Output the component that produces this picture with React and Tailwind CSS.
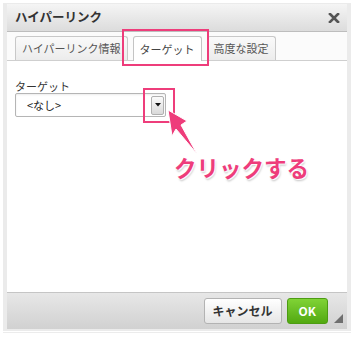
import React from 'react'

const jp = "font-['Noto_Sans_CJK_JP','Noto_Sans',sans-serif]"

function Tab({ label, active }) {
  if (active) {
    return (
      <div className="h-[25px] -mb-px px-[6px] flex items-center bg-white border border-b-0 border-[#c4c4c4] rounded-t-[3px] text-[11px] text-[#444]">
        {label}
      </div>
    )
  }
  return (
    <div className="h-[24px] px-[6px] flex items-center bg-gradient-to-b from-[#fafafa] to-[#ececec] border border-b-0 border-[#c8c8c8] rounded-t-[3px] text-[11px] text-[#555]">
      {label}
    </div>
  )
}

export default function App() {
  return (
    <div className={`relative w-[359px] h-[339px] bg-white overflow-hidden ${jp}`}>
      <div className="ml-[3px] mt-[3px] w-[348px] bg-[#ebebeb] px-[4px] pt-[1px] pb-[2px]">
        <div className="relative flex flex-col h-[325px] bg-white">
          {/* header */}
          <div className="h-[28px] shrink-0 flex items-center justify-between pl-[8px] pr-[6px] bg-gradient-to-b from-[#f5f5f5] to-[#dcdcdc] border-b border-[#bdbdbd]">
            <span className="text-[12.5px] font-bold text-[#333] leading-none">ハイパーリンク</span>
            <svg width="12" height="10" viewBox="0 0 12 10" className="mr-[1px]">
              <path d="M2 1 L10 9 M10 1 L2 9" stroke="#555" strokeWidth="2.6" strokeLinecap="square" />
            </svg>
          </div>

          {/* tabs */}
          <div className="h-[29px] shrink-0 flex items-end gap-[5px] pl-[8px] border-b border-[#cfcfcf] bg-[#fbfbfb]">
            <Tab label="ハイパーリンク情報" />
            <Tab label="ターゲット" active />
            <Tab label="高度な設定" />
          </div>

          {/* body */}
          <div className="flex-1 px-[8px] pt-[19px]">
            <div className="text-[11px] leading-[13px] text-[#333]">ターゲット</div>
            <div className="w-[151px] h-[24px] flex items-center justify-between border border-[#b5b5b5] rounded-[2px] bg-white shadow-[inset_0_1px_2px_rgba(0,0,0,0.08)] pl-[11px] pr-[1px]">
              <span className="text-[11px] text-[#222]">&lt;なし&gt;</span>
              <div className="w-[13px] h-[19px] flex items-center justify-center bg-gradient-to-b from-[#fbfbfb] to-[#d9d9d9] border border-[#b0b0b0] rounded-[2px]">
                <svg width="6" height="4" viewBox="0 0 6 4">
                  <path d="M0 0 H6 L3 3.5 Z" fill="#111" />
                </svg>
              </div>
            </div>
          </div>

          {/* footer */}
          <div className="h-[37px] shrink-0 flex items-center justify-end gap-[5px] pr-[19px] border-t border-[#c5c5c5] bg-gradient-to-b from-[#e7e7e7] to-[#d1d1d1]">
            <button className="h-[26px] px-[8px] rounded-[3px] border border-[#b3b3b3] bg-gradient-to-b from-[#ffffff] to-[#e6e6e6] text-[12px] font-bold text-[#333] leading-none">
              キャンセル
            </button>
            <button className="h-[26px] px-[11px] rounded-[3px] border border-[#4c9c12] bg-gradient-to-b from-[#80d335] to-[#52a910] text-[12px] font-bold text-white leading-none">
              OK
            </button>
          </div>

          {/* resize grip */}
          <svg width="9" height="9" viewBox="0 0 9 9" className="absolute right-[4px] bottom-[6px]">
            <path d="M9 0 V9 H0 Z" fill="#6f6f6f" />
          </svg>
        </div>
      </div>
      <div className="mx-[3px] mt-[1px] h-px w-[348px] bg-[#ececec]" />

      {/* annotations */}
      <div className="absolute left-[122px] top-[29px] w-[87px] h-[37px] border-[2.5px] border-[#ee3d7b]" />
      <div className="absolute left-[143px] top-[88px] w-[32px] h-[35px] border-[2.5px] border-[#ee3d7b]" />
      <svg width="359" height="339" viewBox="0 0 359 339" className="absolute left-0 top-0 pointer-events-none">
        <polygon
          points="168,110 187,121 181,125 197,154 176,129 172,136"
          fill="#ee3d7b"
          stroke="#ffffff"
          strokeWidth="1"
          strokeLinejoin="round"
        />
      </svg>
      <div className="absolute left-[174px] top-[155px] text-[22.5px] leading-[24px] font-bold text-[#ee3d7b] [text-shadow:0_0_2px_#fff,1px_1px_1px_#fff,-1px_-1px_1px_#fff,1px_2px_2px_rgba(0,0,0,0.25)]">
        クリックする
      </div>
    </div>
  )
}
